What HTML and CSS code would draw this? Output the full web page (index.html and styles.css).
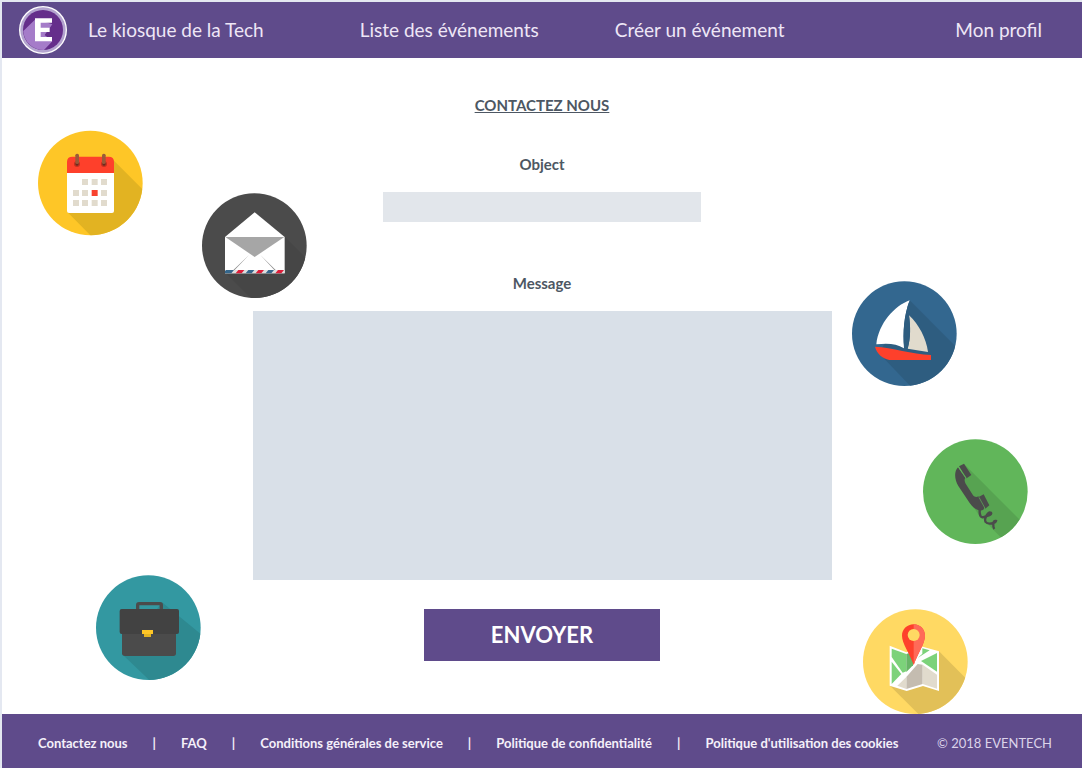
FILE: index.html
```html
<!DOCTYPE html>
<html lang="fr">
<head>
<meta charset="utf-8">
<meta name="viewport" content="width=device-width, initial-scale=1">
<title>Contactez nous</title>
<link rel="stylesheet" href="styles.css">
</head>
<body>
<header class="site-header">
  <a class="brand" href="#">
    <svg class="logo" viewBox="0 0 150 150" aria-hidden="true">
      <circle cx="75" cy="75" r="72" fill="#fff"/>
      <circle cx="75" cy="75" r="68" fill="#b3a3cf"/>
      <circle cx="75" cy="75" r="60" fill="#652e8b"/>
      <path d="M53 42 L16 78 A60 60 0 0 0 78 135 L103 109 L80 90 L103 58Z" fill="#a57cc9"/>
      <path d="M51 40H102V53H68V68H95V81H68V96H102V109H51Z" fill="#fff"/>
    </svg>
    <span>Le kiosque de la Tech</span>
  </a>
  <nav class="main-nav" aria-label="Navigation principale">
    <a href="#">Liste des événements</a>
    <a href="#">Créer un événement</a>
  </nav>
  <a class="profile" href="#">Mon profil</a>
</header>

<main class="contact">
  <form class="contact-form">
    <h1 class="title">CONTACTEZ NOUS</h1>
    <label class="label" for="object">Object</label>
    <input class="object-field" id="object" type="text">
    <label class="label label-message" for="message">Message</label>
    <textarea class="message-field" id="message"></textarea>
    <button class="submit" type="submit">ENVOYER</button>
  </form>

  <svg class="badge badge-calendar" viewBox="0 0 360 360" aria-hidden="true">
    <clipPath id="disc"><circle cx="181" cy="179" r="157"/></clipPath>
    <g transform="translate(0 10)">
      <circle cx="181" cy="179" r="157" fill="#fec627"/>
      <g clip-path="url(#disc)"><path d="M250 110L360 220V360H205L112 266Z" fill="#e2b322"/></g>
      <path d="M111 145H252V263Q252 269 246 269H117Q111 269 111 263Z" fill="#fff"/>
      <path d="M111 149V116Q111 100 127 100H236Q252 100 252 116V149Z" fill="#fe402b"/>
      <g fill="#c4301f"><circle cx="141" cy="122" r="9"/><circle cx="222" cy="122" r="9"/></g>
      <g fill="#6b2c20"><circle cx="141" cy="122" r="5"/><circle cx="222" cy="122" r="5"/></g>
      <g fill="#9a5a3a"><rect x="136" y="91" width="11" height="31" rx="5"/><rect x="216" y="91" width="11" height="31" rx="5"/></g>
      <g fill="#e1dbcd">
        <path d="M156 167h18v18h-18zM185 167h18v18h-18zM213 167h18v18h-18z"/>
        <path d="M129 200h18v18h-18zM156 200h18v18h-18zM213 200h18v18h-18z"/>
        <path d="M129 230h18v18h-18zM156 230h18v18h-18zM185 230h18v18h-18zM213 230h18v18h-18z"/>
      </g>
      <path d="M185 200h18v18h-18z" fill="#f8422f"/>
    </g>
  </svg>

  <svg class="badge badge-mail" viewBox="0 0 360 360" aria-hidden="true">
    <circle cx="181" cy="179" r="157" fill="#4b4b4b"/>
    <g clip-path="url(#disc)"><path d="M272 152L360 240V360H195L94 260Z" fill="#464646"/></g>
    <path d="M93 153L182 79L272 153V262H93Z" fill="#fff"/>
    <path d="M94 153H271L182 213Z" fill="#a6a6a6"/>
    <path d="M118 252L165 207L122 252ZM245 252L199 207L241 252Z" fill="#8f8f8f"/>
    <path d="M93 252H272V262H93Z" fill="#dedede"/>
    <path d="M96 252H120L112 262H93V256ZM163 252H181L173 262H155ZM223 252H240L232 262H215Z" fill="#35678c"/>
    <path d="M133 252H151L143 262H125ZM193 252H210L202 262H185ZM252 252H270L262 262H244Z" fill="#dc1f3a"/>
  </svg>

  <svg class="badge badge-boat" viewBox="0 0 360 360" aria-hidden="true">
    <circle cx="181" cy="179" r="157" fill="#33678f"/>
    <g clip-path="url(#disc)"><path d="M197 79L360 242V360H222L105 238Z" fill="#2e5d80"/></g>
    <path d="M197 79C151 96 104 148 97 211C133 207 157 209 180 223C176 174 180 123 197 79Z" fill="#fff"/>
    <path d="M195 124C200 158 200 193 191 224L252 234C247 193 224 151 195 124Z" fill="#e1dbcd"/>
    <path d="M197 79C180 125 176 176 181 223L191 224C201 190 199 157 195 124Z" fill="#2e5d80"/>
    <path d="M93 218C145 221 203 240 261 243V258H136C115 253 98 239 93 218Z" fill="#fe402b"/>
  </svg>

  <svg class="badge badge-phone" viewBox="0 0 360 360" aria-hidden="true">
    <circle cx="181" cy="179" r="157" fill="#61b65a"/>
    <g clip-path="url(#disc)"><path d="M148 97L330 279L300 360L190 247L132 160Z" fill="#57a351"/></g>
    <path d="M129 106L151 138C147 142 149 150 153 157L174 190C178 195 185 196 190 193L211 223L205 233L197 236C184 234 174 227 164 213L130 162C119 144 116 119 129 106Z" fill="#4b4b4b"/>
    <path d="M132 103L147 95L169 129L155 139Z" fill="#4b4b4b"/>
    <path d="M191 195L206 187L223 220L211 230Z" fill="#4b4b4b"/>
    <path d="M131 106L153 138M192 196L210 229" stroke="#61b65a" stroke-width="2"/>
    <path d="M194 233C193 253 198 258 207 255C218 252 232 248 228 242C219 237 206 261 212 270C217 278 241 275 243 267C232 264 234 285 238 291" fill="none" stroke="#4b4b4b" stroke-width="7"/>
  </svg>

  <svg class="badge badge-briefcase" viewBox="0 0 360 360" aria-hidden="true">
    <circle cx="181" cy="179" r="157" fill="#3398a1"/>
    <g clip-path="url(#disc)"><path d="M222 103L360 216V360H209L105 261Z" fill="#2e8990"/></g>
    <rect x="149" y="107" width="71" height="30" rx="4" fill="none" stroke="#4b4b4b" stroke-width="10"/>
    <path d="M102 192H264V256Q264 264 256 264H111Q102 264 102 256Z" fill="#4b4b4b"/>
    <path d="M95 129Q95 123 101 123H267Q273 123 273 129V192Q273 198 267 198H101Q95 198 95 192Z" fill="#424242"/>
    <path d="M168 197H189V207H168Z" fill="#e2b322"/>
    <path d="M162 186H195V198H162Z" fill="#fec627"/>
  </svg>

  <svg class="badge badge-map" viewBox="0 0 360 360" aria-hidden="true">
    <circle cx="181" cy="179" r="157" fill="#ffd963"/>
    <g clip-path="url(#disc)"><path d="M252 148L360 257V360H214L105 251Z" fill="#e2c058"/></g>
    <path d="M104 131L154 151L203 134L252 148V267L204 252L155 267L104 251Z" fill="#fff"/>
    <path d="M110 140L154 156V208L143 212L110 165Z" fill="#7cd27a"/>
    <path d="M154 156L174 149V190L154 210Z" fill="#68b566"/>
    <path d="M202 139L224 145L188 168L202 155Z" fill="#7cd27a"/>
    <path d="M110 179L139 216L110 246Z" fill="#7cd27a"/>
    <path d="M246 153V209L198 177Z" fill="#7cd27a"/>
    <path d="M154 225L188 186L203 188V246L154 261Z" fill="#c4bcb0"/>
    <path d="M154 225V261L127 251Z" fill="#e1dbcd"/>
    <path d="M203 188L246 218V260L203 246Z" fill="#e1dbcd"/>
    <path d="M176 67C196 67 210 82 210 101C210 125 188 154 176 189C164 154 141 125 141 101C141 82 156 67 176 67Z" fill="#fe402b"/>
    <path d="M176 67C196 67 210 82 210 101C210 125 188 154 176 189Z" fill="#ff6a58"/>
    <circle cx="176" cy="99" r="18" fill="#ffd963"/>
  </svg>
</main>

<footer class="site-footer">
  <ul class="footer-links">
    <li><a href="#">Contactez nous</a></li>
    <li><a href="#">FAQ</a></li>
    <li><a href="#">Conditions générales de service</a></li>
    <li><a href="#">Politique de confidentialité</a></li>
    <li><a href="#">Politique d'utilisation des cookies</a></li>
  </ul>
  <p class="copyright">© 2018 EVENTECH</p>
</footer>
</body>
</html>
```
FILE: styles.css
```css
* {
  box-sizing: border-box;
}

body {
  margin: 0;
  min-height: 100vh;
  display: flex;
  flex-direction: column;
  border: solid #e4e8f1;
  border-width: 2px 0 0 2px;
  background: #fff;
  color: #4d5763;
  font-family: Lato, "Open Sans", sans-serif;
}

a {
  color: inherit;
  text-decoration: none;
}

.site-header {
  display: flex;
  align-items: center;
  height: 56px;
  padding: 0 40px 0 16px;
  background: #5f4b8b;
  color: #eee6f6;
  font-size: 19px;
  line-height: 24px;
}

.brand {
  display: flex;
  align-items: center;
  gap: 20px;
}

.logo {
  width: 50px;
  height: 50px;
}

.main-nav {
  display: flex;
  gap: 76px;
  margin-left: 96px;
}

.profile {
  margin-left: auto;
}

.contact {
  position: relative;
  flex: 1;
  padding: 37px 0 52px;
}

.contact-form {
  display: flex;
  flex-direction: column;
  align-items: center;
}

.title {
  margin: 0 0 39px;
  font-size: 15px;
  line-height: 20px;
  font-weight: 700;
  text-decoration: underline;
}

.label {
  margin-bottom: 18px;
  font-size: 15px;
  line-height: 20px;
  font-weight: 700;
}

.label-message {
  margin-top: 51px;
}

.object-field,
.message-field {
  border: 0;
  border-radius: 0;
  padding: 8px;
  color: inherit;
  font: inherit;
}

.object-field {
  width: 318px;
  height: 30px;
  background: #e2e6eb;
}

.message-field {
  width: 579px;
  max-width: 100%;
  height: 269px;
  background: #d9e0e8;
  resize: none;
}

.submit {
  width: 236px;
  height: 52px;
  margin-top: 29px;
  border: 0;
  background: #5f4b8b;
  color: #fff;
  font: 700 22px/28px Lato, "Open Sans", sans-serif;
}

/* Decorative badges scattered around the form */
.badge {
  position: absolute;
  width: 120px;
  height: 120px;
}

.badge-calendar {
  left: 28px;
  top: 62px;
}

.badge-mail {
  left: 192px;
  top: 128px;
}

.badge-boat {
  right: 118px;
  top: 216px;
}

.badge-phone {
  right: 47px;
  top: 374px;
}

.badge-briefcase {
  left: 86px;
  top: 510px;
}

.badge-map {
  right: 107px;
  top: 544px;
}

.site-footer {
  position: relative;
  display: flex;
  align-items: center;
  justify-content: space-between;
  min-height: 54px;
  padding: 4px 30px 0 36px;
  background: #5f4b8b;
  color: #f5f0fa;
  font-size: 13px;
  line-height: 20px;
}

.footer-links {
  display: flex;
  margin: 0;
  padding: 0;
  list-style: none;
  font-weight: 700;
}

.footer-links li + li::before {
  content: "|";
  margin: 0 25px;
}

.copyright {
  margin: 0;
  color: #dcd3ea;
}
```
